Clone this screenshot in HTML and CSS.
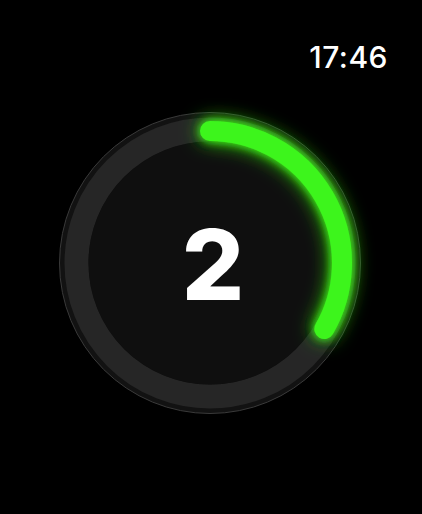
FILE: index.html
```html
<!DOCTYPE html>
<html lang="en">
<head>
<meta charset="utf-8">
<title>Countdown</title>
<link rel="stylesheet" href="styles.css">
</head>
<body>
<div class="screen">
  <header class="status">
    <span class="time">17:46</span>
  </header>
  <main class="dial">
    <svg class="ring" viewBox="0 0 302 302" width="302" height="302" aria-hidden="true">
      <defs>
        <filter id="glow" x="-50%" y="-50%" width="200%" height="200%">
          <feGaussianBlur in="SourceGraphic" stdDeviation="10" result="blurWide"/>
          <feGaussianBlur in="SourceGraphic" stdDeviation="4" result="blurNear"/>
          <feMerge>
            <feMergeNode in="blurWide"/>
            <feMergeNode in="blurNear"/>
            <feMergeNode in="SourceGraphic"/>
          </feMerge>
        </filter>
      </defs>
      <circle cx="151" cy="151" r="150.5" fill="#121212" stroke="#3a3a3a" stroke-width="1"/>
      <circle cx="151" cy="151" r="133.5" fill="none" stroke="#262626" stroke-width="24"/>
      <circle cx="151" cy="151" r="121.5" fill="#0f0f0f"/>
      <path d="M 151 19 A 132 132 0 0 1 265.3 217" fill="none" stroke="#3cf51e" stroke-width="20" stroke-linecap="round" filter="url(#glow)"/>
    </svg>
    <div class="count">2</div>
  </main>
</div>
</body>
</html>
```
FILE: styles.css
```css
html, body {
  margin: 0;
  padding: 0;
  background: #000;
}

.screen {
  width: 422px;
  height: 514px;
  display: flex;
  flex-direction: column;
  background: #000;
  font-family: Inter, "Liberation Sans", sans-serif;
  overflow: hidden;
}

.status {
  display: flex;
  justify-content: flex-end;
  padding: 42px 34px 0 0;
}

.time {
  color: #fff;
  font-size: 30px;
  line-height: 30px;
  font-weight: 500;
  letter-spacing: 0.5px;
}

.dial {
  display: grid;
  place-items: center;
  width: 302px;
  height: 302px;
  margin: 40px 0 0 59px;
}

.ring {
  grid-area: 1 / 1;
  overflow: visible;
  display: block;
}

.count {
  grid-area: 1 / 1;
  color: #fff;
  font-size: 98px;
  line-height: 1;
  font-weight: 800;
  position: relative;
  left: 3px;
  top: 2px;
}
```
